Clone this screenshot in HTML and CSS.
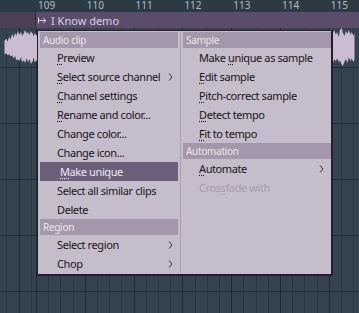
FILE: index.html
```html
<!DOCTYPE html>
<html>
<head>
<meta charset="utf-8">
<link rel="stylesheet" href="styles.css">
</head>
<body>
<div class="daw">
  <div class="ruler">
    <span class="bar-num">109</span><span class="bar-num">110</span><span class="bar-num">111</span><span class="bar-num">112</span><span class="bar-num">113</span><span class="bar-num">114</span><span class="bar-num bar-last">115</span>
  </div>
  <div class="track track-clip">
    <div class="clip-bar">
      <div class="clip-prev"></div>
      <div class="clip-title">
        <svg class="clip-icon" width="9" height="7" viewBox="0 0 9 7"><path d="M0.5 0.5V6.5M0.5 3.5H8M5 1L8 3.5L5 6" fill="none" stroke="#d8cfe2" stroke-width="1"/></svg>
        <span>I Know demo</span>
      </div>
    </div>
    <svg class="wave" width="359" height="40" viewBox="0 28 359 40">
      <path fill="#cbbcd3" d="M0 41L2 39L3 42L5 37L6 40L8 34L9 38L11 33L12 36L14 31L15 35L17 32L18 36L20 33L21 30L23 34L24 32L26 35L27 31L29 34L30 37L31 33L33 36L34 32L36 35L38 33L38 62L36 60L34 64L33 61L31 63L30 58L29 62L27 65L26 60L24 63L23 59L21 64L20 61L18 63L17 58L15 62L14 60L12 61L11 57L9 59L8 56L6 57L5 55L3 56L2 54L0 55Z"/>
      <path fill="#cbbcd3" d="M331 36L332 31L334 34L335 29L337 33L338 30L340 35L341 32L343 37L344 30L346 28L347 33L349 36L350 31L352 34L353 30L355 35L356 32L358 36L359 33L359 60L358 63L356 59L355 62L353 58L352 64L350 60L349 62L347 67L346 66L344 61L343 63L341 59L340 62L338 60L337 64L335 59L334 62L332 58L331 61Z"/>
    </svg>
  </div>
  <div class="track"></div>
  <div class="track"></div>
  <div class="track"></div>
  <div class="track"></div>
  <div class="track"></div>

  <div class="menu">
    <div class="col col-left">
      <div class="sec">Audio clip</div>
      <div class="item"><span><u class="k">P</u>review</span></div>
      <div class="item"><span><u class="k">S</u>elect source channel</span><svg class="chev" width="5" height="8" viewBox="0 0 5 8"><path d="M1 0.5L4 4L1 7.5" fill="none" stroke="#3a3040" stroke-width="1"/></svg></div>
      <div class="item"><span><u class="k">C</u>hannel settings</span></div>
      <div class="item"><span><u class="k">R</u>ename and color...</span></div>
      <div class="item"><span>Change color...</span></div>
      <div class="item"><span>Change icon...</span></div>
      <div class="item item-hot"><span><u class="k">M</u>ake unique</span></div>
      <div class="item"><span>Select all similar clips</span></div>
      <div class="item"><span>Delete</span></div>
      <div class="sec">Region</div>
      <div class="item"><span>Select region</span><svg class="chev" width="5" height="8" viewBox="0 0 5 8"><path d="M1 0.5L4 4L1 7.5" fill="none" stroke="#3a3040" stroke-width="1"/></svg></div>
      <div class="item"><span>Chop</span><svg class="chev" width="5" height="8" viewBox="0 0 5 8"><path d="M1 0.5L4 4L1 7.5" fill="none" stroke="#3a3040" stroke-width="1"/></svg></div>
    </div>
    <div class="col col-right">
      <div class="sec">Sample</div>
      <div class="item"><span>Make <u class="k">u</u>nique as sample</span></div>
      <div class="item"><span><u class="k">E</u>dit sample</span></div>
      <div class="item"><span><u class="k">P</u>itch-correct sample</span></div>
      <div class="item"><span><u class="k">D</u>etect tempo</span></div>
      <div class="item"><span><u class="k">F</u>it to tempo</span></div>
      <div class="sec">Automation</div>
      <div class="item"><span><u class="k">A</u>utomate</span><svg class="chev" width="5" height="8" viewBox="0 0 5 8"><path d="M1 0.5L4 4L1 7.5" fill="none" stroke="#3a3040" stroke-width="1"/></svg></div>
      <div class="item item-off"><span>Cros<u class="k">s</u>fade with</span></div>
    </div>
  </div>
</div>
</body>
</html>
```

FILE: styles.css
```css
* { box-sizing: border-box; }
html, body {
  margin: 0;
  padding: 0;
  background: #34434d;
}
body {
  width: 359px;
  height: 313px;
  overflow: hidden;
  font-family: "Noto Sans", "DejaVu Sans", sans-serif;
}
.daw {
  position: relative;
  width: 359px;
  height: 313px;
  overflow: hidden;
  background: #34434d;
}
.ruler {
  height: 12px;
  background: #2c3a43;
  display: flex;
  padding-left: 38px;
}
.bar-num {
  flex: 0 0 48.8px;
  font-size: 10px;
  line-height: 11px;
  color: #aebcc6;
}
.bar-last { flex: 0 0 auto; }
.track {
  height: 56px;
  border-bottom: 1px solid #1f2b33;
  background-color: #34434d;
  background-image:
    repeating-linear-gradient(90deg, #1f2b33 0 1px, transparent 1px 48.8px),
    repeating-linear-gradient(90deg, #2a3841 0 1px, transparent 1px 12.2px);
  background-position: 36px 0, 36px 0;
}
.track-clip {
  display: flex;
  flex-direction: column;
}
.clip-bar {
  height: 16px;
  display: flex;
}
.clip-prev {
  width: 36px;
  background: #4c4056;
  border-right: 1px solid #2e2535;
}
.clip-title {
  flex: 1;
  background: #5b4d69;
  display: flex;
  align-items: center;
  gap: 4px;
  padding-left: 2px;
  color: #d8cfe2;
  font-size: 11px;
}
.clip-icon { display: block; }
.wave {
  display: block;
  height: 39px;
}
.menu {
  position: absolute;
  left: 37px;
  top: 30px;
  width: 296px;
  height: 246px;
  background: #c5bdcb;
  border-style: solid;
  border-color: #271d2f;
  border-width: 1px 2px 2px 1px;
  display: flex;
  padding: 1px 0 1px 0;
  font-size: 11px;
  letter-spacing: -0.4px;
  color: #1b1420;
}
.col {
  display: flex;
  flex-direction: column;
}
.col-left {
  width: 143px;
  padding: 0 2px;
  border-right: 1px solid #aaa0b0;
}
.col-right {
  flex: 1;
  padding-left: 2px;
}
.sec {
  height: 16px;
  background: #a597ab;
  color: #ebe4ef;
  font-size: 10px;
  letter-spacing: -0.3px;
  line-height: 16px;
  padding-left: 3px;
}
.item {
  height: 19px;
  display: flex;
  align-items: center;
  justify-content: space-between;
  padding-left: 17px;
  padding-right: 5px;
  white-space: nowrap;
}
.col-right .item { padding-left: 16px; padding-right: 7px; }
.item-hot {
  background: #6d5e79;
  color: #efe9f4;
  padding-left: 20px;
}
.item-off { color: #a59cad; }
.k {
  text-decoration: underline dotted;
  text-underline-offset: 2px;
}
.chev { display: block; }
```
